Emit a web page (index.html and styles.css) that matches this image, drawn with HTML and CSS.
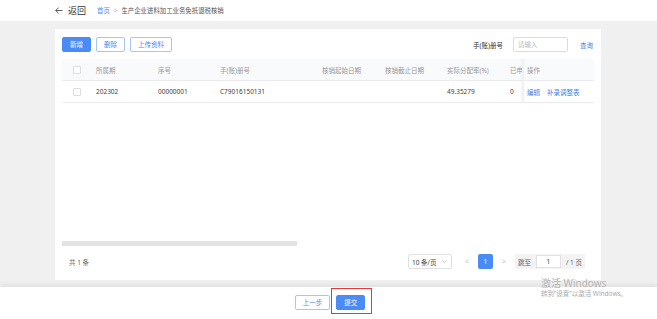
FILE: index.html
```html
<!DOCTYPE html>
<html lang="zh-CN">
<head>
<meta charset="utf-8">
<title>生产企业进料加工业务免抵退税核销</title>
<link rel="stylesheet" href="styles.css">
</head>
<body>
<div class="page">
  <header class="topbar">
    <span class="back"><svg class="arrow" width="8" height="7" viewBox="0 0 8 7"><path d="M7.5 3.5H0.8M3.6 0.6L0.7 3.5L3.6 6.4" fill="none" stroke="#333" stroke-width="0.8"/></svg>返回</span>
    <nav class="crumb"><span class="crumb-home">首页</span><span class="crumb-sep">&gt;</span><span>生产企业进料加工业务免抵退税核销</span></nav>
  </header>
  <main class="main">
    <section class="card">
      <div class="toolbar">
        <div class="tb-left">
          <button class="btn btn-primary">新增</button>
          <button class="btn btn-outline">删除</button>
          <button class="btn btn-outline">上传资料</button>
        </div>
        <div class="tb-right">
          <span class="lbl">手(账)册号</span>
          <span class="input placeholder">请输入</span>
          <span class="link search">查询</span>
        </div>
      </div>
      <div class="table">
        <div class="tbl-cols">
          <div class="scroll">
            <div class="row head">
              <div class="c c-chk"><span class="chk"></span></div>
              <div class="c c1">所属期</div>
              <div class="c c2">序号</div>
              <div class="c c3">手(账)册号</div>
              <div class="c c4">核销起始日期</div>
              <div class="c c5">核销截止日期</div>
              <div class="c c6">实际分配率(%)</div>
              <div class="c c7">已申报</div>
            </div>
            <div class="row data">
              <div class="c c-chk"><span class="chk"></span></div>
              <div class="c c1">202302</div>
              <div class="c c2">00000001</div>
              <div class="c c3">C79016150131</div>
              <div class="c c4"></div>
              <div class="c c5"></div>
              <div class="c c6">49.35279</div>
              <div class="c c7">0</div>
            </div>
          </div>
          <div class="fixed">
            <div class="row head"><div class="c">操作</div></div>
            <div class="row data"><div class="c ops"><span class="link">编辑</span><span class="link">补录调整表</span></div></div>
          </div>
        </div>
        <div class="tbl-space"></div>
        <div class="hscroll"><div class="thumb"></div></div>
      </div>
      <div class="pager">
        <span class="total">共 1 条</span>
        <div class="pg-right">
          <span class="select"><span>10 条/页</span><span class="caret"><svg width="5" height="3" viewBox="0 0 5 3"><path d="M0.4 0.4L2.5 2.5L4.6 0.4" fill="none" stroke="#aaa" stroke-width="0.6"/></svg></span></span>
          <span class="pg-arrow prev">&lt;</span>
          <span class="pg-num">1</span>
          <span class="pg-arrow">&gt;</span>
          <span class="jump"><span>跳至</span><span class="jump-input">1</span><span>/ 1 页</span></span>
        </div>
      </div>
    </section>
  </main>
  <footer class="footer">
    <button class="btn btn-outline">上一步</button>
    <button class="btn btn-primary submit">提交</button>
  </footer>
  <div class="watermark">
    <div class="wm1">激活 Windows</div>
    <div class="wm2">转到“设置”以激活 Windows。</div>
  </div>
</div>
</body>
</html>
```

FILE: styles.css
```css
* { box-sizing: border-box; }
html, body { margin: 0; padding: 0; }
body {
  font-family: "Noto Sans", "Noto Sans CJK SC", sans-serif;
  font-size: 6.5px;
  color: #444;
  background: #f0f0f0;
}
.page {
  position: relative;
  width: 657px;
  height: 319px;
  display: flex;
  flex-direction: column;
  overflow: hidden;
}
.topbar {
  height: 21px;
  background: #fff;
  display: flex;
  align-items: center;
  padding-left: 55px;
  gap: 11px;
}
.back { font-size: 9px; color: #333; display: flex; align-items: center; gap: 5px; }
.arrow { display: block; }
.crumb { display: flex; align-items: center; gap: 4px; font-size: 6.4px; color: #555; }
.crumb-home { color: #4a8af4; }
.crumb-sep { color: #aaa; }
.main {
  flex: 1;
  padding: 8px 56px 7px 55px;
}
.card {
  background: #fff;
  height: 251px;
  padding: 8px 7px 0 7px;
  display: flex;
  flex-direction: column;
}
.toolbar { display: flex; justify-content: space-between; align-items: center; height: 15px; }
.tb-left { display: flex; gap: 5px; }
.btn {
  font-family: inherit;
  font-size: 6.5px;
  height: 15px;
  padding: 0 7px;
  border-radius: 2px;
  cursor: pointer;
  line-height: 13px;
}
.btn-primary { background: #4a8cf6; border: 1px solid #4a8cf6; color: #fff; min-width: 28px; }
.btn-outline { background: #fff; border: 1px solid #a8c6f5; color: #4a8af4; min-width: 28px; }
.tb-right { display: flex; align-items: center; }
.lbl { color: #333; margin-right: 10px; }
.input {
  width: 55px; height: 15px; border: 1px solid #ddd; border-radius: 2px;
  padding-left: 4px; line-height: 13px;
}
.placeholder { color: #bbb; }
.link { color: #3f80e6; }
.search { margin-left: 12px; margin-right: 1px; }
.table {
  margin-top: 7px;
  height: 187px;
  display: flex;
  flex-direction: column;
}
.tbl-cols { display: flex; }
.scroll { width: 460px; overflow: hidden; }
.fixed { width: 72px; border-left: 2px solid #eef0f2; box-shadow: -1px 0 2px rgba(0,0,0,0.04); }
.row { display: flex; height: 22px; align-items: center; border-bottom: 1px solid #ebebeb; white-space: nowrap; }
.row.head { background: #f9fafb; color: #999; }
.row.data { color: #444; }
.c { padding-left: 7px; flex: none; }
.c-chk { width: 27px; padding-left: 11px; display: flex; }
.chk { width: 8px; height: 8px; border: 1px solid #ddd; border-radius: 1px; background: #fff; }
.c1 { width: 62px; }
.c2 { width: 62px; }
.c3 { width: 102px; }
.c4 { width: 63px; }
.c5 { width: 62px; }
.c6 { width: 63px; }
.c7 { width: 60px; }
.fixed .c { padding-left: 3px; }
.ops { display: flex; gap: 7px; }
.tbl-space { flex: 1; }
.hscroll { height: 5px; width: 460px; }
.thumb { width: 235px; height: 5px; background: #e3e3e3; }
.pager {
  margin-top: 8px;
  height: 15px;
  display: flex;
  justify-content: space-between;
  align-items: center;
  padding: 0 9px 0 7px;
  color: #666;
}
.pg-right { display: flex; align-items: center; }
.select {
  width: 44px; height: 15px; border: 1px solid #e0e0e0; border-radius: 2px;
  padding: 0 4px 0 3px; color: #444;
  display: flex; justify-content: space-between; align-items: center;
}
.caret { display: flex; }
.pg-arrow { color: #bbb; width: 8px; text-align: center; margin: 0 3px; }
.pg-arrow.prev { margin-left: 11px; }
.pg-num {
  width: 15px; height: 15px; background: #4a8cf6; color: #fff; border-radius: 2px;
  text-align: center; line-height: 15px; margin: 0 4px;
}
.jump {
  margin-left: 4px; height: 15px; background: #f3f3f3; white-space: nowrap;
  display: flex; align-items: center; padding: 0 3px; gap: 5px; color: #666;
}
.jump-input {
  width: 25px; height: 13px; background: #fff; border: 1px solid #e2e2e2;
  text-align: center; line-height: 11px; color: #444;
}
.footer {
  height: 32px;
  background: #fff;
  box-shadow: 0 -2px 5px rgba(0,0,0,0.07);
  display: flex;
  justify-content: center;
  align-items: flex-start;
  padding-top: 8px;
  gap: 6px;
  padding-left: 3px;
}
.footer .btn-outline { min-width: 34px; }
.footer .btn-primary { min-width: 27px; }
.submit { position: relative; }
.submit::after {
  content: "";
  position: absolute;
  top: -8px; left: -6px; right: -8px; bottom: -5px;
  border: 1px solid #e53935;
}
.watermark {
  position: absolute;
  left: 541px;
  top: 277px;
  color: #b5b5b5;
  pointer-events: none;
}
.wm1 { font-size: 10px; line-height: 12px; }
.wm2 { font-size: 6.5px; line-height: 9px; color: #aaa; }
```
